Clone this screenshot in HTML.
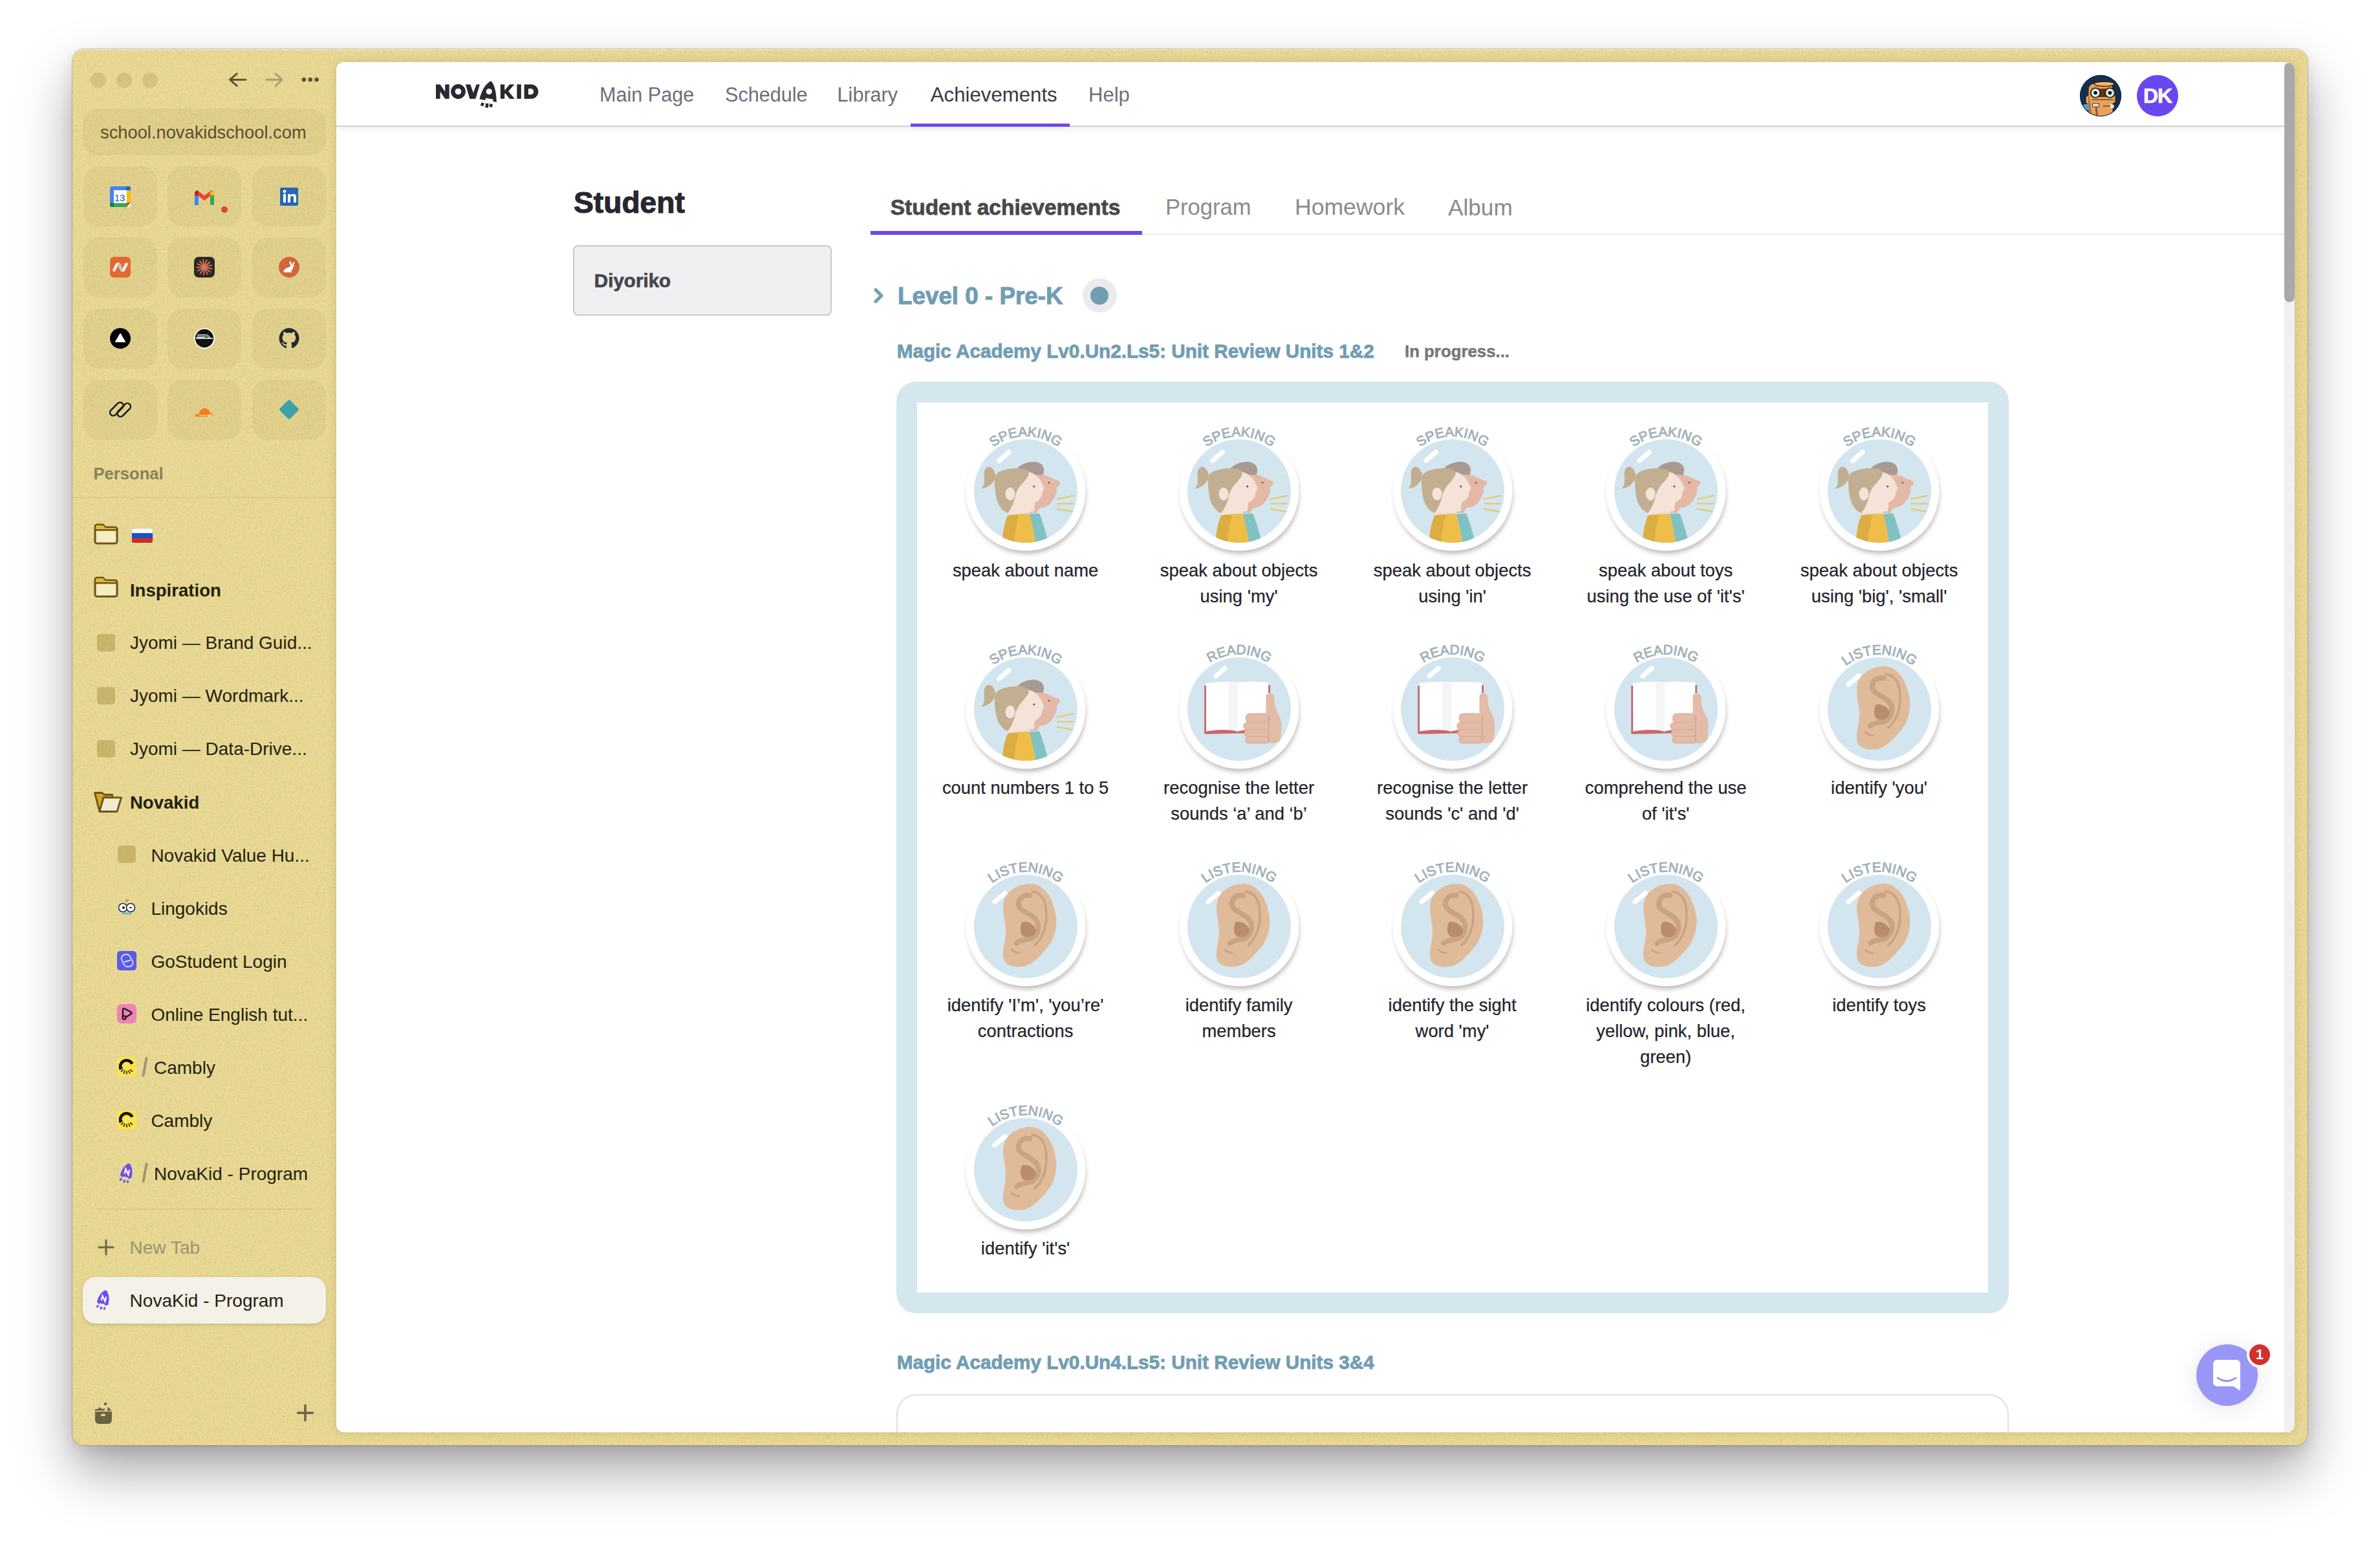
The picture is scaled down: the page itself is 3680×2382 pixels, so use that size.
<!DOCTYPE html><html><head><meta charset="utf-8"><style>
*{margin:0;padding:0;box-sizing:border-box}
html,body{width:3680px;height:2382px;overflow:hidden;background:#fff}
body{position:relative;font-family:"Liberation Sans",sans-serif}
.t{position:absolute;white-space:nowrap;line-height:1}
.a{position:absolute}
#win{position:absolute;left:112px;top:76px;width:3456px;height:2158px;border-radius:18px;background:#eada96;
 box-shadow:0 0 0 1px rgba(90,70,20,.28),inset 0 1.5px 0 rgba(255,250,225,.55),0 40px 84px rgba(0,0,0,.35),0 10px 22px rgba(0,0,0,.10)}
#content{position:absolute;left:520px;top:96px;width:3028px;height:2118px;border-radius:12px;background:#fff;overflow:hidden;
 box-shadow:0 0 14px rgba(80,60,0,.16)}
.tile{position:absolute;width:114px;height:93px;border-radius:24px;background:rgba(110,90,10,.06)}
.dot{position:absolute;width:24px;height:24px;border-radius:50%;background:rgba(110,90,10,.15)}
.lbl{position:absolute;width:330px;text-align:center;font-size:27.4px;line-height:40px;color:#24242c;white-space:normal;-webkit-text-stroke:0.25px #24242c}
</style></head><body><svg width="0" height="0" style="position:absolute">
<defs>
<filter id="bsh" x="-20%" y="-20%" width="140%" height="140%"><feGaussianBlur stdDeviation="3.5"/></filter>
<clipPath id="bclip"><circle cx="0" cy="0" r="80"/></clipPath>
<path id="arc" d="M-84.5 0A84.5 84.5 0 0 1 84.5 0"/>
<g id="bbase">
 <circle cx="1.5" cy="6" r="91" fill="rgba(0,0,0,.26)" filter="url(#bsh)"/>
 <circle cx="0" cy="0" r="92.5" fill="#fff"/>
 <circle cx="0" cy="0" r="80" fill="#d3e5ee"/>
</g>
<g id="hl-s"><path d="M-41 -47L-26 -60" stroke="#fff" stroke-width="7.5" stroke-linecap="round"/></g><g id="hl-r"><path d="M-36 -51L-22 -63" stroke="#fff" stroke-width="7.5" stroke-linecap="round"/></g><g id="hl-l"><path d="M-48 -38L-32 -51.5" stroke="#fff" stroke-width="7.5" stroke-linecap="round"/></g>
<g id="ill-speak" clip-path="url(#bclip)">
 <path d="M-15 -33C-8 -42 5 -46 15 -45 24 -44 29 -38 28 -30 27 -25 25 -21 22 -20L5 -22z" fill="#a99a91"/>
 <path d="M8 -24C18 -26 30 -26 36 -22 42 -19 46 -17 50 -16 54 -15 54 -10 50 -8 47 -6 48 -2 48 1 46 8 42 16 36 21 32 24 26 26 22 26L16 34H6z" fill="#e3b8a4"/>
 <circle cx="36" cy="-12.8" r="1.3" fill="#6b5248"/>
 <path d="M-47 -26C-50 -36-56-40-61-36-66-32-64-24-64-16-64-10-66-6-69-4-60-4-52-10-48-18z" fill="#c2ae8f"/>
 <path d="M3 -30C14 -28 22 -20 25 -12 27 -8 29 -6 28 -3 27 0 25 2 25 5 25 9 22 14 14 18L13 31-28 38-26 25C-33 15-36 0-30 -15-25 -26-10 -31 3 -30z" fill="#f5e2d8"/>
 <path d="M-47 -24C-42 -32-25 -36-8 -35 0 -34 4 -32 5 -28 4 -20-4 -14-10 -6-14 0-16 6-17 12-20 22-24 30-28 34-38 30-44 20-46 8-48 -4-49 -16-47 -24z" fill="#c2ae90"/>
 <ellipse cx="-24" cy="4.5" rx="7.5" ry="10" fill="#f5e2d8"/>
 <circle cx="12.8" cy="-7" r="1.4" fill="#5a463c"/>
 <path d="M4 36C10 35 16 34.5 21 34.5 26 46 30 60 34 76L15 82C13 66 10 50 4 36z" fill="#80c2c3"/>
 <path d="M-28 38C-20 36-5 35 6 35.5 10 50 13 66 15 82H-36C-36 66-33 50-28 38z" fill="#efbe48"/>
 <path d="M-28 38C-22 37-15 36.5-11 37-14 50-17 65-18 82H-36C-36 66-33 50-28 38z" fill="#dcad43"/>
 <path d="M49 12.5L74 7.3M49 19.6H74M48.5 27.4L72.5 32" stroke="#ecc55a" stroke-width="2" stroke-linecap="round"/>
</g>
<g id="ill-read" clip-path="url(#bclip)">
 <path d="M-2.6 -41.5C12 -43 32 -42 45.4 -40.9V35L10.4 35.7C5 33 0 34-2.6 35z" fill="#fff"/>
 <path d="M-51.3 -40.2C-36 -42-14 -43-2.6 -41.5V35C-8 32-30 31-50.6 34.4z" fill="#fff"/>
 <path d="M-16 -42.3C-11 -42.6-7 -42.2-2.6 -41.5V35C-7 33.5-11 32.5-16 32z" fill="#f5f5f5"/>
 <path d="M-50.6 34.4C-30 31-8 32-2.6 35 2 33 6 33 10.4 32V37.2L-52 38.8z" fill="#c9666b"/>
 <path d="M-52.4 -36V38.3" stroke="#c9666b" stroke-width="2.8"/>
 <path d="M46.6 -37V-25" stroke="#c9666b" stroke-width="2.8"/>
 <path d="M41.5 -17.5C41 -23 44 -25 48 -24.5 53 -24 55 -20 54.5 -14 54 -6 58 4 63 12 66 20 66 36 63.6 47.4 60 52 54 53 48 52.6L45.4 52V7H41.5z" fill="#e3bba6"/>
 <g fill="#e3bba6" stroke="#d7a992" stroke-width="1.1">
  <rect x="10.5" y="7" width="36" height="14" rx="6"/>
  <rect x="7" y="20.8" width="39.5" height="11.2" rx="5.5"/>
  <rect x="8" y="31.8" width="38.5" height="10.6" rx="5.3"/>
  <rect x="10" y="42.2" width="36.5" height="10.6" rx="5.3"/>
 </g>
 <path d="M45.6 12V51" stroke="#d3a48d" stroke-width="1.5"/>
</g>
<g id="ill-listen" clip-path="url(#bclip)">
 <path d="M6.5 -66C25 -66 40 -50 46 -20 50 0 44 20 34 32 22 46 10 60-4 62-20 64-34 60-35 46-36 34-30 20-31 3-32 -10-37 -25-34 -38-31 -52-14 -66 6.5 -66z" fill="#dfbb99"/>
 <path d="M10 -54C24 -52 32 -40 32 -18 32 0 28 16 14 29" stroke="#c9a383" stroke-width="3.5" fill="none" stroke-linecap="round"/>
 <path d="M6 -48C-6 -50-14 -40-10 -30-6 -22 8 -20 16 -10 22 -2 20 12 10 18 2 22-8 20-14 26" stroke="#c9a383" stroke-width="8" fill="none" stroke-linecap="round"/>
 <path d="M-6 -6C0 -10 14 -4 16 6 16 14 6 18-2 16-8 14-10 4-6 -6z" fill="#b78d6d"/>
 <path d="M-22 36C-18 40-14 41-10 41" stroke="#c9a383" stroke-width="2.5" fill="none" stroke-linecap="round"/>
</g>
</defs></svg>
<div id="win"></div>
<svg class="a" style="left:112px;top:76px" width="3456" height="2158"><defs><filter id="nz" x="0" y="0" width="100%" height="100%"><feTurbulence type="fractalNoise" baseFrequency="0.35" numOctaves="2" seed="3" stitchTiles="stitch"/><feColorMatrix values="0 0 0 0 0.42  0 0 0 0 0.36  0 0 0 0 0.12  0.55 0 0 0 -0.22"/><feComposite in2="SourceAlpha" operator="in"/></filter></defs><rect width="3456" height="2158" rx="18" filter="url(#nz)"/></svg>
<div class="dot" style="left:140px;top:112px"></div>
<div class="dot" style="left:180px;top:112px"></div>
<div class="dot" style="left:220px;top:112px"></div>
<svg class="a" style="left:350px;top:108px" width="150" height="30" viewBox="0 0 150 30"><path d="M5.5 15.2H30M5.5 15.2L16.3 5.9M5.5 15.2L16.3 24.8" stroke="#5d5332" stroke-width="2.9" fill="none" stroke-linecap="round" stroke-linejoin="round"/><path d="M61.7 15.2H86.2M86.2 15.2L76 5.9M86.2 15.2L76 24.8" stroke="#aa9d70" stroke-width="2.9" fill="none" stroke-linecap="round" stroke-linejoin="round"/><circle cx="119.9" cy="15.1" r="3.3" fill="#5d5332"/><circle cx="129.8" cy="15.1" r="3.3" fill="#5d5332"/><circle cx="139.6" cy="15.1" r="3.3" fill="#5d5332"/></svg>
<div class="a" style="left:128px;top:168px;width:376px;height:72px;border-radius:22px;background:rgba(110,90,10,.065)"></div>
<div class="t" style="left:155.0px;top:190.9px;font-size:27.3px;color:#5b4f2b;font-weight:normal;">school.novakidschool.com</div>
<div class="tile" style="left:128.5px;top:257px"></div>
<div class="tile" style="left:259px;top:257px"></div>
<div class="tile" style="left:389.5px;top:257px"></div>
<div class="tile" style="left:128.5px;top:366.5px"></div>
<div class="tile" style="left:259px;top:366.5px"></div>
<div class="tile" style="left:389.5px;top:366.5px"></div>
<div class="tile" style="left:128.5px;top:476.5px"></div>
<div class="tile" style="left:259px;top:476.5px"></div>
<div class="tile" style="left:389.5px;top:476.5px"></div>
<div class="tile" style="left:128.5px;top:586.5px"></div>
<div class="tile" style="left:259px;top:586.5px"></div>
<div class="tile" style="left:389.5px;top:586.5px"></div>
<svg class="a" style="left:168.5px;top:286.5px" width="34" height="34" viewBox="0 0 34 34"><rect x="1" y="1" width="32" height="32" rx="3" fill="#fff"/><path d="M1 4a3 3 0 0 1 3-3h22v6H7v20H1z" fill="#4285f4"/><path d="M26 1h4a3 3 0 0 1 3 3v3h-7z" fill="#1967d2"/><path d="M27 7h6v19h-6z" fill="#fbbc04"/><path d="M1 27h26v6H4a3 3 0 0 1-3-3z" fill="#34a853"/><path d="M1 27h6v6H4a3 3 0 0 1-3-3z" fill="#188038"/><path d="M27 26h6l-6 7z" fill="#ea4335"/><text x="16" y="24" font-family="Liberation Sans" font-size="15" fill="#1a57c0" text-anchor="middle">13</text></svg>
<svg class="a" style="left:299.0px;top:286.5px" width="34" height="34" viewBox="0 0 34 34"><path d="M2 10v20h6V16l9 7 9-7v14h6V10l-4-3-11 8.5L6 7z" fill="#ea4335"/><path d="M2 10v20h6V15z" fill="#4285f4"/><path d="M26 15v15h6V10z" fill="#34a853"/><path d="M26 10l4-3 2 3v5l-6 0z" fill="#fbbc04"/><path d="M2 10l4-3 2 3v5H2z" fill="#c5221f"/></svg>
<div class="a" style="left:342px;top:319px;width:10px;height:10px;border-radius:50%;background:#e0443a"></div>
<svg class="a" style="left:429.5px;top:286.5px" width="34" height="34" viewBox="0 0 34 34"><rect x="3" y="3" width="28" height="28" rx="2" fill="#2867b2"/><rect x="8" y="13" width="4" height="13" fill="#fff"/><circle cx="10" cy="9" r="2.4" fill="#fff"/><path d="M15 13h4v2c1-1.6 2.6-2.3 4.4-2.3 3 0 4.6 1.8 4.6 5.2V26h-4v-7.4c0-1.8-.7-2.7-2.2-2.7-1.6 0-2.8 1-2.8 3V26h-4z" fill="#fff"/></svg>
<svg class="a" style="left:168.5px;top:396.0px" width="34" height="34" viewBox="0 0 34 34"><rect x="1" y="1" width="32" height="32" rx="6" fill="#e26a32"/><path d="M7.5 21.5l4.2-8.2c.9-1.7 2.6-1.7 3.5 0l3.6 7.2c.9 1.7 2.6 1.7 3.5 0l4.2-8.2" stroke="#f2eeee" stroke-width="4.6" fill="none" stroke-linecap="round" stroke-linejoin="round"/><path d="M15.2 13.3l3.6 7.2" stroke="#c9c2c2" stroke-width="4.6" stroke-linecap="round"/></svg>
<svg class="a" style="left:299.0px;top:396.0px" width="34" height="34" viewBox="0 0 34 34"><rect x="1" y="1" width="32" height="32" rx="7" fill="#2b2a27"/><circle cx="17" cy="17" r="3" fill="#d97757"/><line x1="19.9" y1="17.6" x2="28.3" y2="19.3" stroke="#d97757" stroke-width="1.9" stroke-linecap="round"/><line x1="19.3" y1="18.9" x2="25.9" y2="24.3" stroke="#d97757" stroke-width="1.9" stroke-linecap="round"/><line x1="18.2" y1="19.8" x2="21.5" y2="27.6" stroke="#d97757" stroke-width="1.9" stroke-linecap="round"/><line x1="16.8" y1="20.0" x2="16.1" y2="28.5" stroke="#d97757" stroke-width="1.9" stroke-linecap="round"/><line x1="15.4" y1="19.5" x2="10.9" y2="26.7" stroke="#d97757" stroke-width="1.9" stroke-linecap="round"/><line x1="14.4" y1="18.5" x2="7.0" y2="22.8" stroke="#d97757" stroke-width="1.9" stroke-linecap="round"/><line x1="14.0" y1="17.1" x2="5.5" y2="17.5" stroke="#d97757" stroke-width="1.9" stroke-linecap="round"/><line x1="14.3" y1="15.7" x2="6.6" y2="12.1" stroke="#d97757" stroke-width="1.9" stroke-linecap="round"/><line x1="15.2" y1="14.6" x2="10.1" y2="7.8" stroke="#d97757" stroke-width="1.9" stroke-linecap="round"/><line x1="16.5" y1="14.0" x2="15.1" y2="5.7" stroke="#d97757" stroke-width="1.9" stroke-linecap="round"/><line x1="17.9" y1="14.2" x2="20.6" y2="6.1" stroke="#d97757" stroke-width="1.9" stroke-linecap="round"/><line x1="19.2" y1="14.9" x2="25.3" y2="9.0" stroke="#d97757" stroke-width="1.9" stroke-linecap="round"/><line x1="19.9" y1="16.2" x2="28.0" y2="13.8" stroke="#d97757" stroke-width="1.9" stroke-linecap="round"/></svg>
<svg class="a" style="left:429.5px;top:396.0px" width="34" height="34" viewBox="0 0 34 34"><circle cx="17" cy="17" r="16" fill="#d4643a"/><path d="M8.5 25.5c-.5-3 1.5-6.5 5.5-7.5 2-.5 3.5-1 4.5-2.5.8-1.3 1.8-2 3.2-1.8l2.3.5c.8.2 1 1 .5 1.6l-1.5 1.5c0 2.5-1 4.5-3 5.5l1.5 2.2H8.5z" fill="#fff"/><path d="M19.5 14.5c-1.5-2-2.5-4.5-2-6 .4-1 1.5-.8 2.2.3l2 4.2zM21.8 14c.5-2.2 1.2-4.5 2.4-5.2.9-.5 1.5.3 1.1 1.4l-1.6 4.2z" fill="#fff"/></svg>
<svg class="a" style="left:168.5px;top:506.0px" width="34" height="34" viewBox="0 0 34 34"><circle cx="17" cy="17" r="16" fill="#000"/><path d="M17 8.5l8.5 14.5h-17z" fill="#fff"/></svg>
<svg class="a" style="left:299.0px;top:506.0px" width="34" height="34" viewBox="0 0 34 34"><circle cx="17" cy="17" r="16" fill="#fff"/><circle cx="17" cy="17" r="14.2" fill="#111"/><path d="M4 17h26" stroke="#fff" stroke-width="1.6"/><path d="M6 11.5h12c4 0 7 2.5 8 5.5M5.5 13.5h12.5c3 0 5 1.5 6 3.5M5 15.5h13" stroke="#fff" stroke-width="1.1" fill="none"/></svg>
<svg class="a" style="left:429.5px;top:506.0px" width="34" height="34" viewBox="0 0 34 34"><path d="M17 1a16 16 0 0 0-5 31c.8.1 1-.3 1-.8v-3c-4.5 1-5.4-2-5.4-2-.7-1.8-1.8-2.3-1.8-2.3-1.5-1 .1-1 .1-1 1.6.1 2.5 1.7 2.5 1.7 1.4 2.5 3.8 1.8 4.7 1.4.1-1 .6-1.8 1-2.2-3.6-.4-7.4-1.8-7.4-8 0-1.8.6-3.2 1.7-4.4-.2-.4-.7-2 .2-4.3 0 0 1.3-.4 4.4 1.7a15 15 0 0 1 8 0c3-2 4.4-1.7 4.4-1.7.9 2.2.3 3.9.2 4.3 1 1.1 1.7 2.6 1.7 4.4 0 6.2-3.8 7.6-7.4 8 .6.5 1.1 1.5 1.1 3v4.4c0 .5.3.9 1.1.8A16 16 0 0 0 17 1z" fill="#24292f"/></svg>
<svg class="a" style="left:168.5px;top:616.0px" width="34" height="34" viewBox="0 0 34 34"><g stroke="#141414" stroke-width="2.4" fill="none"><rect x="-16" y="-9.5" width="25" height="10" rx="5" transform="translate(17 17) rotate(-45)"/><rect x="-9" y="-0.5" width="25" height="10" rx="5" transform="translate(17 17) rotate(-45)"/></g></svg>
<svg class="a" style="left:299.0px;top:616.0px" width="34" height="34" viewBox="0 0 34 34"><path d="M2.5 28c0-2.8 2-4.6 4.5-4.6.6 0 1.1.1 1.6.3C9.3 18.6 12.8 15 17.5 15c4.2 0 7.5 3 8.2 6.8 3 .3 5.3 3 5.3 6.2z" fill="#f38020"/><path d="M23.5 28c.3-2.4 2.2-4.2 4.5-4.2 2 0 3.5 1.8 3.5 4.2z" fill="#fbad41"/><path d="M8 26.2h17" stroke="#fde7c8" stroke-width="1"/><path d="M25 23.8l.7 2.2 2.2.7-2.2.7-.7 2.2-.7-2.2-2.2-.7 2.2-.7z" fill="#fff"/></svg>
<svg class="a" style="left:429.5px;top:616.0px" width="34" height="34" viewBox="0 0 34 34"><path d="M15 3.2a2.8 2.8 0 0 1 4 0l11.8 11.8a2.8 2.8 0 0 1 0 4L19 30.8a2.8 2.8 0 0 1-4 0L3.2 19a2.8 2.8 0 0 1 0-4z" fill="#3da1a8"/></svg>
<div class="t" style="left:144.5px;top:720.3px;font-size:25.6px;color:#8a8058;font-weight:bold;">Personal</div>
<div class="a" style="left:112px;top:768px;width:408px;height:2px;background:rgba(110,90,10,.08)"></div>
<svg class="a" style="left:144px;top:806px" width="40" height="38" viewBox="0 0 40 38"><path d="M3 8a3 3 0 0 1 3-3h9l4 4h15a3 3 0 0 1 3 3v19a3 3 0 0 1-3 3H6a3 3 0 0 1-3-3z" fill="#f6ecc0" stroke="#6b5416" stroke-width="3"/><path d="M3 13h34" stroke="#6b5416" stroke-width="3"/><path d="M4 12V8a2 2 0 0 1 2-2h9l4 4h16v2z" fill="#e2b92a"/></svg>
<svg class="a" style="left:204px;top:817px" width="32" height="22" viewBox="0 0 32 22"><rect width="32" height="22" rx="3" fill="#fff"/><rect y="7" width="32" height="8" fill="#1b4fd0"/><path d="M0 15h32v4a3 3 0 0 1-3 3H3a3 3 0 0 1-3-3z" fill="#d52b1e"/><rect width="32" height="22" rx="3" fill="none" stroke="rgba(0,0,0,.15)"/></svg>
<svg class="a" style="left:144px;top:888px" width="40" height="38" viewBox="0 0 40 38"><path d="M3 8a3 3 0 0 1 3-3h9l4 4h15a3 3 0 0 1 3 3v19a3 3 0 0 1-3 3H6a3 3 0 0 1-3-3z" fill="#f6ecc0" stroke="#6b5416" stroke-width="3"/><path d="M3 13h34" stroke="#6b5416" stroke-width="3"/><path d="M4 12V8a2 2 0 0 1 2-2h9l4 4h16v2z" fill="#e2b92a"/></svg>
<div class="t" style="left:200.9px;top:898.6px;font-size:27.6px;color:#24200e;font-weight:bold;">Inspiration</div>
<div class="a" style="left:150px;top:980px;width:28px;height:27px;border-radius:5px;background:rgba(120,95,10,.28)"></div>
<div class="t" style="left:200.9px;top:980.3px;font-size:28px;color:#24200e;font-weight:normal;">Jyomi — Brand Guid...</div>
<div class="a" style="left:150px;top:1062px;width:28px;height:27px;border-radius:5px;background:rgba(120,95,10,.28)"></div>
<div class="t" style="left:200.9px;top:1062.3px;font-size:28px;color:#24200e;font-weight:normal;">Jyomi — Wordmark...</div>
<div class="a" style="left:150px;top:1144px;width:28px;height:27px;border-radius:5px;background:rgba(120,95,10,.28)"></div>
<div class="t" style="left:200.9px;top:1144.3px;font-size:28px;color:#24200e;font-weight:normal;">Jyomi — Data-Drive...</div>
<svg class="a" style="left:143px;top:1217px" width="48" height="42" viewBox="0 0 48 42"><path d="M3.5 8.5H14.5L19 11.5H30.5L31 15.9H17L11 37.5z" fill="#d3a81f" stroke="#6b5416" stroke-width="2.8" stroke-linejoin="round"/><path d="M17 15.9H44.5L38 37.5H11z" fill="#f1ead0" stroke="#6b5416" stroke-width="2.8" stroke-linejoin="round"/></svg>
<div class="t" style="left:200.9px;top:1226.6px;font-size:27.6px;color:#24200e;font-weight:bold;">Novakid</div>
<div class="a" style="left:182px;top:1307.0px;width:28px;height:27px;border-radius:5px;background:rgba(120,95,10,.28)"></div>
<div class="t" style="left:233.4px;top:1308.8px;font-size:28px;color:#24200e;font-weight:normal;">Novakid Value Hu...</div>
<svg class="a" style="left:179.0px;top:1385.5px" width="34" height="34" viewBox="0 0 34 34"><circle cx="11" cy="17" r="6.5" fill="#fff" stroke="#1d2f55" stroke-width="1.6"/><circle cx="23" cy="17" r="6.5" fill="#fff" stroke="#1d2f55" stroke-width="1.6"/><circle cx="12" cy="17" r="2" fill="#111"/><path d="M21 17h4" stroke="#111" stroke-width="1.6"/><path d="M10 26h14" stroke="#4fb3d9" stroke-width="2.5"/><path d="M15 8l1-4M18 8l1-4" stroke="#e85a4f" stroke-width="1.5"/></svg>
<div class="t" style="left:233.4px;top:1390.8px;font-size:28px;color:#24200e;font-weight:normal;">Lingokids</div>
<svg class="a" style="left:179.0px;top:1467.5px" width="34" height="34" viewBox="0 0 34 34"><rect x="2" y="2" width="30" height="30" rx="5" fill="#5a5be8"/><path d="M11 9c3-3 9-2 11 1l4 8c2 4-1 7-4 8-4 1-8 0-10-4l-3-7c-1-2 0-4 2-6z M13 19l10-3" stroke="#fff" stroke-width="1.4" fill="none"/></svg>
<div class="t" style="left:233.4px;top:1472.8px;font-size:28px;color:#24200e;font-weight:normal;">GoStudent Login</div>
<svg class="a" style="left:179.0px;top:1549.5px" width="34" height="34" viewBox="0 0 34 34"><rect x="2" y="2" width="30" height="30" rx="7" fill="#ee82b6"/><path d="M11 21V10.5c0-1.5 1.2-2.2 2.5-1.5l10 5.5c1.3.8 1.3 2.3 0 3L16 22" stroke="#1a1a1a" stroke-width="2.4" fill="none" stroke-linejoin="round" stroke-linecap="round"/><circle cx="13" cy="23" r="2.6" stroke="#1a1a1a" stroke-width="2.2" fill="none"/></svg>
<div class="t" style="left:233.4px;top:1554.8px;font-size:28px;color:#24200e;font-weight:normal;">Online English tut...</div>
<svg class="a" style="left:179.0px;top:1631.5px" width="34" height="34" viewBox="0 0 34 34"><rect x="2" y="2" width="30" height="30" rx="6" fill="#fbe44d"/><path d="M25.5 12.5A9.5 9.5 0 1 0 8 21" stroke="#111" stroke-width="4.6" fill="none"/><path d="M22.4 21.5L25.4 24.1" stroke="#111" stroke-width="1.6" stroke-linecap="round"/><path d="M20.0 23.3L21.6 27.0" stroke="#111" stroke-width="1.6" stroke-linecap="round"/><path d="M17.0 24.0L17.0 28.0" stroke="#111" stroke-width="1.6" stroke-linecap="round"/><path d="M14.0 23.3L12.4 27.0" stroke="#111" stroke-width="1.6" stroke-linecap="round"/><path d="M11.6 21.5L8.6 24.1" stroke="#111" stroke-width="1.6" stroke-linecap="round"/><path d="M10.2 18.8L6.4 19.8" stroke="#111" stroke-width="1.6" stroke-linecap="round"/></svg>
<svg class="a" style="left:215px;top:1630.5px" width="20" height="38" viewBox="0 0 20 38"><path d="M11.5 4.5L6.5 31.5" stroke="#a3966a" stroke-width="4" stroke-linecap="round"/></svg>
<div class="t" style="left:238.0px;top:1636.8px;font-size:28px;color:#24200e;font-weight:normal;">Cambly</div>
<svg class="a" style="left:179.0px;top:1713.5px" width="34" height="34" viewBox="0 0 34 34"><rect x="2" y="2" width="30" height="30" rx="6" fill="#fbe44d"/><path d="M25.5 12.5A9.5 9.5 0 1 0 8 21" stroke="#111" stroke-width="4.6" fill="none"/><path d="M22.4 21.5L25.4 24.1" stroke="#111" stroke-width="1.6" stroke-linecap="round"/><path d="M20.0 23.3L21.6 27.0" stroke="#111" stroke-width="1.6" stroke-linecap="round"/><path d="M17.0 24.0L17.0 28.0" stroke="#111" stroke-width="1.6" stroke-linecap="round"/><path d="M14.0 23.3L12.4 27.0" stroke="#111" stroke-width="1.6" stroke-linecap="round"/><path d="M11.6 21.5L8.6 24.1" stroke="#111" stroke-width="1.6" stroke-linecap="round"/><path d="M10.2 18.8L6.4 19.8" stroke="#111" stroke-width="1.6" stroke-linecap="round"/></svg>
<div class="t" style="left:233.4px;top:1718.8px;font-size:28px;color:#24200e;font-weight:normal;">Cambly</div>
<svg class="a" style="left:179.0px;top:1795.5px" width="34" height="34" viewBox="0 0 34 34"><g transform="rotate(14 17 17)"><path d="M17 1.5C23 5.5 26 13 26 23l-5 2.5v-2H13v2L8 23C8 13 11 5.5 17 1.5z" fill="#6d4ff0"/><path d="M14 19v-7.5l6 7.5v-7.5" stroke="#fff" stroke-width="2.2" fill="none"/><path d="M11.5 27.5l-1.8 3.5M16.5 28v4.5M21.5 28l.5 3.5" stroke="#6d4ff0" stroke-width="3"/></g></svg>
<svg class="a" style="left:215px;top:1794.5px" width="20" height="38" viewBox="0 0 20 38"><path d="M11.5 4.5L6.5 31.5" stroke="#a3966a" stroke-width="4" stroke-linecap="round"/></svg>
<div class="t" style="left:238.0px;top:1800.8px;font-size:28px;color:#24200e;font-weight:normal;">NovaKid - Program</div>
<div class="a" style="left:149px;top:1868px;width:335px;height:2px;background:rgba(110,90,10,.1)"></div>
<svg class="a" style="left:150px;top:1914px" width="28" height="28" viewBox="0 0 28 28"><path d="M14 3v22M3 14h22" stroke="#6f6646" stroke-width="3" stroke-linecap="round"/></svg>
<div class="t" style="left:200.6px;top:1915.0px;font-size:28px;color:#9c9270;font-weight:normal;">New Tab</div>
<div class="a" style="left:128px;top:1974px;width:376px;height:72px;border-radius:20px;background:#f4f1e8;box-shadow:0 2px 5px rgba(80,60,0,.2)"></div>
<svg class="a" style="left:143.0px;top:1992.0px" width="34" height="34" viewBox="0 0 34 34"><g transform="rotate(14 17 17)"><path d="M17 1.5C23 5.5 26 13 26 23l-5 2.5v-2H13v2L8 23C8 13 11 5.5 17 1.5z" fill="#6d4ff0"/><path d="M14 19v-7.5l6 7.5v-7.5" stroke="#fff" stroke-width="2.2" fill="none"/><path d="M11.5 27.5l-1.8 3.5M16.5 28v4.5M21.5 28l.5 3.5" stroke="#6d4ff0" stroke-width="3"/></g></svg>
<div class="t" style="left:200.6px;top:1997.3px;font-size:28px;color:#24200e;font-weight:normal;">NovaKid - Program</div>
<svg class="a" style="left:144px;top:2166px" width="32" height="36" viewBox="0 0 32 36"><path d="M3 16h26v13a6 6 0 0 1-6 6H9a6 6 0 0 1-6-6z" fill="#6a6244"/><rect x="12" y="19.5" width="7" height="3.4" rx="1.7" fill="#e8d692"/><path d="M2 14.5c0-1.5 1.5-2.5 3-2.5h2.5l2-3 3.5 2.5H19l-2 3z" fill="#6a6244"/><circle cx="19" cy="4" r="2.2" fill="#6a6244"/><path d="M22.5 8.5l6 5.5-6.5 1.5z" fill="#6a6244"/></svg>
<svg class="a" style="left:457px;top:2169px" width="30" height="30" viewBox="0 0 30 30"><path d="M15 3.5v23M3.5 15h23" stroke="#6a6244" stroke-width="3.5" stroke-linecap="round"/></svg>
<div id="content">
<div class="a" style="left:0.0px;top:0.0px;width:3012.0px;height:100.0px;background:#fff;border-bottom:2px solid #d2d2d5;box-shadow:0 4px 10px rgba(0,0,0,.07)"></div>
<svg class="a" style="left:150px;top:24px" width="170" height="50" viewBox="670 120 170 50"><g fill="#2a2830"><path d="M674 130.4h6.6l7.6 11.4v-11.4h6.5v22.3h-6.5l-7.6-11.2v11.2H674z"/><circle cx="708.5" cy="141.5" r="8.1" fill="none" stroke="#2a2830" stroke-width="6.6"/><path d="M719.9 130.4h7.4l4.6 13.1 4.7-13.1h5.2l-6.4 22.3h-9.1z"/><path fill-rule="evenodd" d="M741.4 153.3C744 142 750 129 759.4 125.2 764.5 131 767.5 142 767.8 157.9l-5.6-1.3.2-3.2-11.6-1.8-.4 3.4zM756.2 141.5m-4.6 0a4.6 4.6 0 1 0 9.2 0a4.6 4.6 0 1 0-9.2 0z"/><path d="M744.6 158.2l4.3 1.6-1.8 4.6-4.3-1.6zM751 159.6l4.6.6-.8 6.6-4.6-.6zM757.2 160.2l4.5.8-.6 4.9-4.5-.8z"/><path d="M773.8 130.4h6.4v9.4l7.8-9.4h7.4l-9.3 10.6 9.6 11.7h-7.8l-6.6-8.4-1.1 1.3v7.1h-6.4z"/><rect x="799.3" y="130.4" width="6.5" height="22.3"/><path fill-rule="evenodd" d="M810.5 130.4h10.7a11.15 11.15 0 0 1 0 22.3h-10.7zM816.9 137h3.6a4.6 4.6 0 0 1 0 9.3h-3.6z"/></g></svg>
<div class="t" style="left:407.0px;top:35.1px;font-size:30.6px;color:#6d6e7d;font-weight:normal;">Main Page</div>
<div class="t" style="left:601.0px;top:35.1px;font-size:30.6px;color:#6d6e7d;font-weight:normal;">Schedule</div>
<div class="t" style="left:774.6px;top:35.1px;font-size:30.6px;color:#6d6e7d;font-weight:normal;">Library</div>
<div class="t" style="left:918.8px;top:34.6px;font-size:31.2px;color:#393944;font-weight:normal;">Achievements</div>
<div class="t" style="left:1163.0px;top:34.8px;font-size:31px;color:#6d6e7d;font-weight:normal;">Help</div>
<div class="a" style="left:887.6px;top:95.0px;width:246.0px;height:5.0px;background:#6a49f0"></div>
<svg class="a" style="left:2696px;top:20px" width="64" height="64" viewBox="0 0 64 64"><defs><clipPath id="avc"><circle cx="32" cy="32" r="31.5"/></clipPath></defs><circle cx="32" cy="32" r="32" fill="#13304f"/><g clip-path="url(#avc)"><path d="M13 22c0-7 8-11 19-11s19 4 19 11v6l4 4v10l-4 2v24H13V45l-4-2v-9l4-3z" fill="#e9a259" stroke="#2a1608" stroke-width="1"/><path d="M13 24c0 0 2 14 3 20s2 24 2 24h-5z" fill="#b7692e"/><ellipse cx="37.5" cy="13.8" rx="15.5" ry="3.6" fill="#f2b66b" stroke="#2a1608" stroke-width="1.2"/><rect x="16" y="21" width="39" height="13" rx="6.5" fill="#5a3416"/><circle cx="24" cy="27.5" r="8.3" fill="#3a200c"/><circle cx="46.4" cy="27.5" r="8.3" fill="#3a200c"/><circle cx="24" cy="27.5" r="6.4" fill="#d6f2f2"/><circle cx="46.4" cy="27.5" r="6.4" fill="#d6f2f2"/><circle cx="24" cy="27.5" r="2.8" fill="#050a10"/><circle cx="46.4" cy="27.5" r="2.8" fill="#050a10"/><path d="M18 38h34" stroke="#3a200c" stroke-width="1.2"/><rect x="19.6" y="44" width="10" height="5" fill="#dfe4e6" stroke="#2a1608" stroke-width=".8"/><path d="M25 49l2 20" stroke="#8a5a3a" stroke-width="3"/><path d="M5 46l8-2 2 9-8 3z" fill="#4ba2cc"/><path d="M47 44.5l6 2-1 5-5-1z" fill="#e6eef2"/><path d="M36 48h11" stroke="#2a1608" stroke-width="1"/></g><circle cx="32" cy="32" r="31.5" fill="none" stroke="#0f243b" stroke-width="1"/></svg>
<div class="a" style="left:2784px;top:20px;width:64px;height:64px;border-radius:50%;background:#6847f2;color:#fff;font-weight:bold;font-size:32px;line-height:64px;text-align:center;letter-spacing:-1px;-webkit-text-stroke:0.7px #fff">DK</div>
<div class="a" style="left:3012.0px;top:0.0px;width:16.0px;height:2118.0px;background:#f0f0f2"></div>
<div class="a" style="left:3012.0px;top:1.0px;width:16.0px;height:370.0px;background:#a9a9ab;border-radius:8px"></div>
<div class="t" style="left:367.0px;top:193.9px;font-size:46.2px;color:#28262f;font-weight:bold;-webkit-text-stroke:1.1px #28262f">Student</div>
<div class="a" style="left:366.0px;top:283.0px;width:399.5px;height:109.0px;background:#f0f0f2;border:2px solid #c9c9cc;border-radius:8px"></div>
<div class="t" style="left:398.8px;top:323.2px;font-size:29.6px;color:#47474b;font-weight:bold;-webkit-text-stroke:0.7px #47474b">Diyoriko</div>
<div class="t" style="left:856.7px;top:208.2px;font-size:33.5px;color:#48484c;font-weight:bold;-webkit-text-stroke:0.8px #48484c">Student achievements</div>
<div class="t" style="left:1282.0px;top:207.3px;font-size:34.6px;color:#8a8a8e;font-weight:normal;">Program</div>
<div class="t" style="left:1482.0px;top:206.5px;font-size:35.6px;color:#8a8a8e;font-weight:normal;">Homework</div>
<div class="t" style="left:1719.0px;top:206.8px;font-size:35.2px;color:#8a8a8e;font-weight:normal;">Album</div>
<div class="a" style="left:826.0px;top:265.0px;width:2186.0px;height:2.0px;background:#ebebed"></div>
<div class="a" style="left:826.0px;top:260.5px;width:420.0px;height:6.0px;background:#6a49f0"></div>
<svg class="a" style="left:828px;top:348px" width="24" height="26" viewBox="0 0 24 26"><path d="M6 4l9 9-9 9" stroke="#719db3" stroke-width="5.2" fill="none" stroke-linecap="round" stroke-linejoin="round"/></svg>
<div class="t" style="left:868.0px;top:343.8px;font-size:36.8px;color:#719db3;font-weight:bold;-webkit-text-stroke:1px #719db3">Level 0 - Pre-K</div>
<div class="a" style="left:1153.5px;top:334.0px;width:53.0px;height:53.0px;background:#ebebed;border-radius:50%"></div>
<div class="a" style="left:1166.0px;top:346.5px;width:28.0px;height:28.0px;background:#719db3;border-radius:50%"></div>
<div class="t" style="left:866.7px;top:431.6px;font-size:29.7px;color:#719db3;font-weight:bold;-webkit-text-stroke:0.8px #719db3">Magic Academy Lv0.Un2.Ls5: Unit Review Units 1&amp;2</div>
<div class="t" style="left:1652.0px;top:434.7px;font-size:25.8px;color:#77777b;font-weight:bold;-webkit-text-stroke:0.5px #77777b">In progress...</div>
<div class="a" style="left:866.0px;top:494.0px;width:1720.0px;height:1440.0px;background:#d4e6ee;border-radius:31px"></div>
<div class="a" style="left:898.0px;top:526.0px;width:1655.5px;height:1375.5px;background:#fff"></div>
<svg class="a" style="left:955.6px;top:553.3px" width="220" height="230" viewBox="-110 -110 220 230"><use href="#bbase"/><use href="#ill-speak"/><use href="#hl-s"/><text font-family="Liberation Sans" font-size="21" fill="#a3b1b9" stroke="#a3b1b9" stroke-width="0.9"><textPath href="#arc" startOffset="50%" text-anchor="middle" textLength="108" lengthAdjust="spacing">SPEAKING</textPath></text></svg>
<div class="lbl" style="left:900.6px;top:765.6px">speak about name</div>
<svg class="a" style="left:1285.6px;top:553.3px" width="220" height="230" viewBox="-110 -110 220 230"><use href="#bbase"/><use href="#ill-speak"/><use href="#hl-s"/><text font-family="Liberation Sans" font-size="21" fill="#a3b1b9" stroke="#a3b1b9" stroke-width="0.9"><textPath href="#arc" startOffset="50%" text-anchor="middle" textLength="108" lengthAdjust="spacing">SPEAKING</textPath></text></svg>
<div class="lbl" style="left:1230.6px;top:765.6px">speak about objects<br>using 'my'</div>
<svg class="a" style="left:1615.6px;top:553.3px" width="220" height="230" viewBox="-110 -110 220 230"><use href="#bbase"/><use href="#ill-speak"/><use href="#hl-s"/><text font-family="Liberation Sans" font-size="21" fill="#a3b1b9" stroke="#a3b1b9" stroke-width="0.9"><textPath href="#arc" startOffset="50%" text-anchor="middle" textLength="108" lengthAdjust="spacing">SPEAKING</textPath></text></svg>
<div class="lbl" style="left:1560.6px;top:765.6px">speak about objects<br>using 'in'</div>
<svg class="a" style="left:1945.6px;top:553.3px" width="220" height="230" viewBox="-110 -110 220 230"><use href="#bbase"/><use href="#ill-speak"/><use href="#hl-s"/><text font-family="Liberation Sans" font-size="21" fill="#a3b1b9" stroke="#a3b1b9" stroke-width="0.9"><textPath href="#arc" startOffset="50%" text-anchor="middle" textLength="108" lengthAdjust="spacing">SPEAKING</textPath></text></svg>
<div class="lbl" style="left:1890.6px;top:765.6px">speak about toys<br>using the use of 'it's'</div>
<svg class="a" style="left:2275.6px;top:553.3px" width="220" height="230" viewBox="-110 -110 220 230"><use href="#bbase"/><use href="#ill-speak"/><use href="#hl-s"/><text font-family="Liberation Sans" font-size="21" fill="#a3b1b9" stroke="#a3b1b9" stroke-width="0.9"><textPath href="#arc" startOffset="50%" text-anchor="middle" textLength="108" lengthAdjust="spacing">SPEAKING</textPath></text></svg>
<div class="lbl" style="left:2220.6px;top:765.6px">speak about objects<br>using 'big', 'small'</div>
<svg class="a" style="left:955.6px;top:889.9px" width="220" height="230" viewBox="-110 -110 220 230"><use href="#bbase"/><use href="#ill-speak"/><use href="#hl-s"/><text font-family="Liberation Sans" font-size="21" fill="#a3b1b9" stroke="#a3b1b9" stroke-width="0.9"><textPath href="#arc" startOffset="50%" text-anchor="middle" textLength="108" lengthAdjust="spacing">SPEAKING</textPath></text></svg>
<div class="lbl" style="left:900.6px;top:1102.2px">count numbers 1 to 5</div>
<svg class="a" style="left:1285.6px;top:889.9px" width="220" height="230" viewBox="-110 -110 220 230"><use href="#bbase"/><use href="#ill-read"/><use href="#hl-r"/><text font-family="Liberation Sans" font-size="21" fill="#a3b1b9" stroke="#a3b1b9" stroke-width="0.9"><textPath href="#arc" startOffset="50%" text-anchor="middle" textLength="96" lengthAdjust="spacing">READING</textPath></text></svg>
<div class="lbl" style="left:1230.6px;top:1102.2px">recognise the letter<br>sounds ‘a’ and ‘b’</div>
<svg class="a" style="left:1615.6px;top:889.9px" width="220" height="230" viewBox="-110 -110 220 230"><use href="#bbase"/><use href="#ill-read"/><use href="#hl-r"/><text font-family="Liberation Sans" font-size="21" fill="#a3b1b9" stroke="#a3b1b9" stroke-width="0.9"><textPath href="#arc" startOffset="50%" text-anchor="middle" textLength="96" lengthAdjust="spacing">READING</textPath></text></svg>
<div class="lbl" style="left:1560.6px;top:1102.2px">recognise the letter<br>sounds 'c' and 'd'</div>
<svg class="a" style="left:1945.6px;top:889.9px" width="220" height="230" viewBox="-110 -110 220 230"><use href="#bbase"/><use href="#ill-read"/><use href="#hl-r"/><text font-family="Liberation Sans" font-size="21" fill="#a3b1b9" stroke="#a3b1b9" stroke-width="0.9"><textPath href="#arc" startOffset="50%" text-anchor="middle" textLength="96" lengthAdjust="spacing">READING</textPath></text></svg>
<div class="lbl" style="left:1890.6px;top:1102.2px">comprehend the use<br>of 'it's'</div>
<svg class="a" style="left:2275.6px;top:889.9px" width="220" height="230" viewBox="-110 -110 220 230"><use href="#bbase"/><use href="#ill-listen"/><use href="#hl-l"/><text font-family="Liberation Sans" font-size="21" fill="#a3b1b9" stroke="#a3b1b9" stroke-width="0.9"><textPath href="#arc" startOffset="50%" text-anchor="middle" textLength="112" lengthAdjust="spacing">LISTENING</textPath></text></svg>
<div class="lbl" style="left:2220.6px;top:1102.2px">identify 'you'</div>
<svg class="a" style="left:955.6px;top:1225.5px" width="220" height="230" viewBox="-110 -110 220 230"><use href="#bbase"/><use href="#ill-listen"/><use href="#hl-l"/><text font-family="Liberation Sans" font-size="21" fill="#a3b1b9" stroke="#a3b1b9" stroke-width="0.9"><textPath href="#arc" startOffset="50%" text-anchor="middle" textLength="112" lengthAdjust="spacing">LISTENING</textPath></text></svg>
<div class="lbl" style="left:900.6px;top:1437.8px">identify 'I’m', 'you’re'<br>contractions</div>
<svg class="a" style="left:1285.6px;top:1225.5px" width="220" height="230" viewBox="-110 -110 220 230"><use href="#bbase"/><use href="#ill-listen"/><use href="#hl-l"/><text font-family="Liberation Sans" font-size="21" fill="#a3b1b9" stroke="#a3b1b9" stroke-width="0.9"><textPath href="#arc" startOffset="50%" text-anchor="middle" textLength="112" lengthAdjust="spacing">LISTENING</textPath></text></svg>
<div class="lbl" style="left:1230.6px;top:1437.8px">identify family<br>members</div>
<svg class="a" style="left:1615.6px;top:1225.5px" width="220" height="230" viewBox="-110 -110 220 230"><use href="#bbase"/><use href="#ill-listen"/><use href="#hl-l"/><text font-family="Liberation Sans" font-size="21" fill="#a3b1b9" stroke="#a3b1b9" stroke-width="0.9"><textPath href="#arc" startOffset="50%" text-anchor="middle" textLength="112" lengthAdjust="spacing">LISTENING</textPath></text></svg>
<div class="lbl" style="left:1560.6px;top:1437.8px">identify the sight<br>word 'my'</div>
<svg class="a" style="left:1945.6px;top:1225.5px" width="220" height="230" viewBox="-110 -110 220 230"><use href="#bbase"/><use href="#ill-listen"/><use href="#hl-l"/><text font-family="Liberation Sans" font-size="21" fill="#a3b1b9" stroke="#a3b1b9" stroke-width="0.9"><textPath href="#arc" startOffset="50%" text-anchor="middle" textLength="112" lengthAdjust="spacing">LISTENING</textPath></text></svg>
<div class="lbl" style="left:1890.6px;top:1437.8px">identify colours (red,<br>yellow, pink, blue,<br>green)</div>
<svg class="a" style="left:2275.6px;top:1225.5px" width="220" height="230" viewBox="-110 -110 220 230"><use href="#bbase"/><use href="#ill-listen"/><use href="#hl-l"/><text font-family="Liberation Sans" font-size="21" fill="#a3b1b9" stroke="#a3b1b9" stroke-width="0.9"><textPath href="#arc" startOffset="50%" text-anchor="middle" textLength="112" lengthAdjust="spacing">LISTENING</textPath></text></svg>
<div class="lbl" style="left:2220.6px;top:1437.8px">identify toys</div>
<svg class="a" style="left:955.6px;top:1601.5px" width="220" height="230" viewBox="-110 -110 220 230"><use href="#bbase"/><use href="#ill-listen"/><use href="#hl-l"/><text font-family="Liberation Sans" font-size="21" fill="#a3b1b9" stroke="#a3b1b9" stroke-width="0.9"><textPath href="#arc" startOffset="50%" text-anchor="middle" textLength="112" lengthAdjust="spacing">LISTENING</textPath></text></svg>
<div class="lbl" style="left:900.6px;top:1813.8px">identify 'it's'</div>
<div class="t" style="left:866.7px;top:1994.9px;font-size:29.7px;color:#719db3;font-weight:bold;-webkit-text-stroke:0.8px #719db3">Magic Academy Lv0.Un4.Ls5: Unit Review Units 3&amp;4</div>
<div class="a" style="left:866.0px;top:2059.0px;width:1720.0px;height:300.0px;background:#fff;border:2px solid #dfdfe4;border-radius:31px"></div>
<div class="a" style="left:2876.1px;top:1982.1px;width:95.4px;height:95.4px;border-radius:50%;background:#9996f6;box-shadow:0 6px 40px rgba(60,50,120,.12)"></div>
<svg class="a" style="left:2900px;top:2004px" width="48" height="52" viewBox="0 0 48 52"><path d="M8 2h30a6 6 0 0 1 6 6v42l-10-7H8a6 6 0 0 1-6-6V8a6 6 0 0 1 6-6z" fill="#fff"/><path d="M9 30c9 6 19 6 28 0" stroke="#9996f6" stroke-width="3" fill="none" stroke-linecap="round"/></svg>
<div class="a" style="left:2953.8px;top:1977.9px;width:40px;height:40px;border-radius:50%;background:#d2302c;border:4px solid #fff;color:#fff;font-weight:bold;font-size:22px;line-height:32px;text-align:center">1</div>
</div></body></html>
